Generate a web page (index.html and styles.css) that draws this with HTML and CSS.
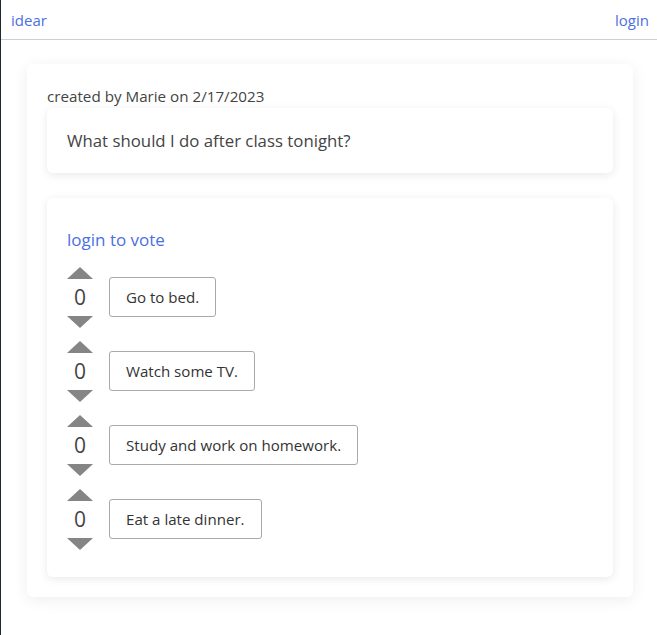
FILE: index.html
```html
<!DOCTYPE html>
<html>
<head>
<meta charset="utf-8">
<link rel="stylesheet" href="styles.css">
</head>
<body>
<div class="page">
  <header class="topbar">
    <a class="brand" href="#">idear</a>
    <a class="nav-login" href="#">login</a>
  </header>
  <main class="content">
    <section class="poll-card">
      <div class="meta">created by Marie on 2/17/2023</div>
      <div class="question-card">What should I do after class tonight?</div>
      <div class="options-card">
        <a class="vote-login" href="#">login to vote</a>
        <div class="options">
          <div class="option">
            <div class="voter"><span class="arrow-up"></span><span class="count">0</span><span class="arrow-down"></span></div>
            <div class="option-label">Go to bed.</div>
          </div>
          <div class="option">
            <div class="voter"><span class="arrow-up"></span><span class="count">0</span><span class="arrow-down"></span></div>
            <div class="option-label">Watch some TV.</div>
          </div>
          <div class="option">
            <div class="voter"><span class="arrow-up"></span><span class="count">0</span><span class="arrow-down"></span></div>
            <div class="option-label">Study and work on homework.</div>
          </div>
          <div class="option">
            <div class="voter"><span class="arrow-up"></span><span class="count">0</span><span class="arrow-down"></span></div>
            <div class="option-label">Eat a late dinner.</div>
          </div>
        </div>
      </div>
    </section>
  </main>
</div>
</body>
</html>
```
FILE: styles.css
```css
* { box-sizing: border-box; }
html, body { margin: 0; padding: 0; background: #fff; }
body {
  font-family: "Open Sans", "Noto Sans", sans-serif;
  color: #3a3a3a;
  height: 635px;
  overflow: hidden;
}
.page {
  border-left: 1px solid #1f2733;
  min-height: 635px;
}
.topbar {
  height: 40px;
  border-bottom: 1px solid #cfcfcf;
  display: flex;
  justify-content: space-between;
  align-items: center;
  padding: 0 8px 0 10px;
}
.topbar a {
  color: #4b6fe3;
  text-decoration: none;
  font-size: 15px;
}
.content {
  padding: 24px 24px 0 26px;
}
.poll-card {
  background: #fff;
  border-radius: 6px;
  box-shadow: 0 3px 16px rgba(0, 0, 0, 0.07);
  padding: 20px 20px 20px 20px;
}
.meta {
  font-size: 15.2px;
  line-height: 24px;
  color: #444;
}
.question-card,
.options-card {
  background: #fff;
  border-radius: 6px;
  box-shadow: 0 2px 10px rgba(0, 0, 0, 0.09);
}
.question-card {
  padding: 20px 20px;
  font-size: 16.8px;
  line-height: 25px;
  color: #444;
}
.options-card {
  margin-top: 25px;
  padding: 28px 20px 27px 20px;
}
.vote-login {
  display: block;
  color: #4b6fe3;
  text-decoration: none;
  font-size: 17px;
  line-height: 28px;
}
.options {
  margin-top: 13px;
  display: flex;
  flex-direction: column;
  gap: 13px;
}
.option {
  display: flex;
  align-items: center;
  gap: 16px;
}
.voter {
  width: 26px;
  display: flex;
  flex-direction: column;
  align-items: center;
}
.arrow-up,
.arrow-down {
  width: 0;
  height: 0;
  border-left: 13px solid transparent;
  border-right: 13px solid transparent;
}
.arrow-up { border-bottom: 12px solid #858585; }
.arrow-down { border-top: 12px solid #858585; }
.count {
  font-size: 21px;
  line-height: 36px;
  height: 37px;
  color: #444;
}
.option-label {
  border: 1px solid #a9a9a9;
  border-radius: 3px;
  padding: 0 16px;
  height: 40px;
  line-height: 38px;
  font-size: 15.1px;
  color: #333;
  margin-bottom: 2px;
}
```
